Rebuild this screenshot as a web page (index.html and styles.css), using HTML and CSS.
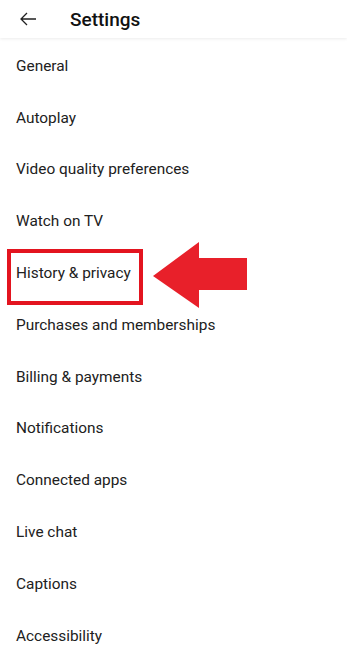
FILE: index.html
```html
<!DOCTYPE html>
<html>
<head>
<meta charset="utf-8">
<link rel="stylesheet" href="styles.css">
</head>
<body>
<div class="screen">
  <header class="topbar">
    <span class="back">
      <svg width="18" height="14" viewBox="0 0 18 14"><path d="M8 1 L2 7 L8 13 M2 7 H17" fill="none" stroke="#212121" stroke-width="1.3"/></svg>
    </span>
    <h1 class="title">Settings</h1>
  </header>
  <ul class="list">
    <li class="item">General</li>
    <li class="item">Autoplay</li>
    <li class="item">Video quality preferences</li>
    <li class="item">Watch on TV</li>
    <li class="item highlight"><span class="boxed">History &amp; privacy</span>
      <svg class="pointer" width="96" height="66" viewBox="0 0 96 66"><polygon points="1,34 47,0 47,16 95,16 95,48 47,48 47,66" fill="#e8202a"/></svg>
    </li>
    <li class="item">Purchases and memberships</li>
    <li class="item">Billing &amp; payments</li>
    <li class="item">Notifications</li>
    <li class="item">Connected apps</li>
    <li class="item">Live chat</li>
    <li class="item">Captions</li>
    <li class="item">Accessibility</li>
  </ul>
  <div class="footer"></div>
</div>
</body>
</html>
```
FILE: styles.css
```css
* { box-sizing: border-box; }
html, body { margin: 0; padding: 0; }
body {
  background: #ffffff;
  font-family: Roboto, "Liberation Sans", sans-serif;
  color: #212121;
  width: 347px;
  height: 659px;
  overflow: hidden;
}
.screen {
  display: flex;
  flex-direction: column;
  height: 659px;
}
.topbar {
  height: 38px;
  display: flex;
  align-items: center;
  padding-left: 19px;
  box-shadow: 0 1px 3px rgba(0,0,0,0.08);
  position: relative;
  z-index: 1;
  flex: none;
}
.back { display: flex; width: 18px; height: 14px; }
.title {
  margin: 0 0 0 33px;
  font-size: 19px;
  font-weight: 500;
  color: #111;
  line-height: 1;
}
.list {
  list-style: none;
  margin: 0;
  padding: 2px 0 0 0;
  flex: 1;
}
.item {
  height: 51.8px;
  display: flex;
  align-items: center;
  padding-left: 16px;
  font-size: 15.4px;
  color: #212121;
  position: relative;
}
.highlight { padding-left: 7px; }
.boxed {
  border: 4px solid #e3141f;
  height: 56px;
  width: 136px;
  margin-top: 8px;
  display: flex;
  align-items: center;
  padding-left: 5px;
  padding-bottom: 9px;
}
.pointer {
  position: absolute;
  left: 152px;
  top: -5px;
}
.footer {
  height: 3px;
  background: #ececec;
  flex: none;
}
```
